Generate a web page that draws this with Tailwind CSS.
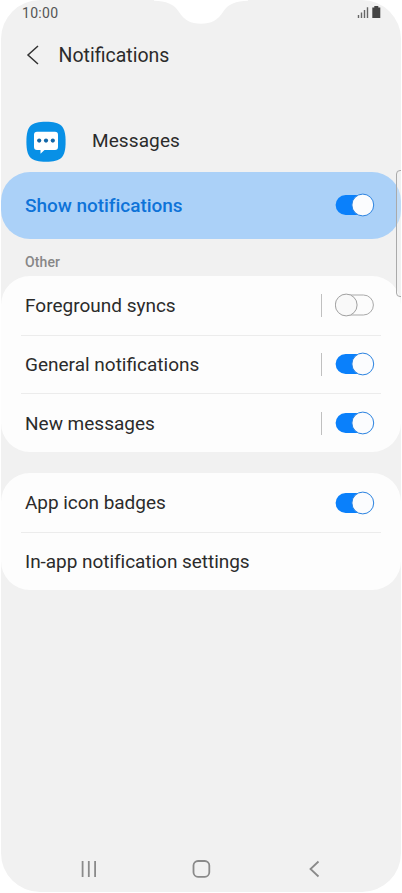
<!DOCTYPE html>
<html lang="en">
<head>
<meta charset="utf-8">
<title>Notifications</title>
<script src="https://cdn.jsdelivr.net/npm/@tailwindcss/browser@4"></script>
</head>
<body class="bg-white font-['Roboto',sans-serif] text-[#2b2b2b]">
<svg class="hidden">
  <symbol id="on" viewBox="0 0 40 24"><rect x="0.6" y="2" width="36" height="20" rx="10" fill="#0a80fb"/><circle cx="27.8" cy="12" r="10.9" fill="#fbfcfe" stroke="#2a82e0" stroke-width="1"/></symbol>
  <symbol id="off" viewBox="0 0 40 24"><rect x="1" y="2" width="37.4" height="20" rx="10" fill="#fcfcfc" stroke="#a9a9a9"/><circle cx="11.2" cy="12" r="10.9" fill="#f9f9f9" stroke="#a0a0a0"/></symbol>
</svg>
<main class="relative mx-px flex h-[892px] w-[400px] flex-col overflow-hidden rounded-[39px] bg-[#f1f1f1]">
  <svg class="absolute left-[153px] top-0 h-[25px] w-[94px]" viewBox="0 0 94 25"><path d="M0 0H94V.8C82 1 74 4 69 12C64 20 57 23.8 47 23.8S30 20 25 12C20 4 12 1 0 .8Z" fill="#fff"/></svg>
  <header class="flex h-[26px] justify-between pl-[21px] pr-[20px]">
    <span class="pt-[5px] text-[14px] leading-4 tracking-[0.3px] text-[#555]">10:00</span>
    <svg class="mt-[5px] h-[14px] w-[24px]" viewBox="0 0 24 14"><path d="M1.5 10v3M4.5 7.5V13M7.5 5V13M10.5 2.2V13" stroke="#666" stroke-width="1.4"/><path d="M15.3 2.5h2V1h4v1.5h2V13h-8z" fill="#444"/></svg>
  </header>
  <div class="flex h-[58px] items-center pl-[25px]">
    <svg class="h-[22px] w-[14px]" viewBox="0 0 14 22" fill="none" stroke="#333" stroke-width="1.5"><path d="M12 2L2 11L12 20"/></svg>
    <h1 class="pl-[18.5px] pt-[2px] text-[19.5px] leading-6">Notifications</h1>
  </div>
  <div class="mt-[37px] flex h-[51px] pl-[25px]">
    <svg class="h-[41px] w-[41px]" viewBox="0 0 41 41"><path d="M20 .8C35 .8 39.6 5 39.6 20.8S35 40.8 20 40.8S.4 36.6 .4 20.8S5 .8 20 .8Z" fill="#0890e6"/><path d="M11 10.8H29Q32 10.8 32 13.8V26Q32 29 29 29H18.5L14.5 32.8V29H11Q8 29 8 26V13.8Q8 10.8 11 10.8Z" fill="#fff"/><g fill="#1267a8"><circle cx="13.2" cy="19.6" r="2.1"/><circle cx="20" cy="19.6" r="2.1"/><circle cx="26.8" cy="19.6" r="2.1"/></g></svg>
    <span class="pl-[25px] pt-[8px] text-[19px] leading-6 tracking-[0.1px]">Messages</span>
  </div>
  <section class="flex h-[67px] items-center justify-between rounded-[29px] bg-[#abd1f8] pl-[24px] pr-[26px] text-[19px] font-medium tracking-[-0.04px] text-[#0e73d8]">
    <span class="pt-[2px]">Show notifications</span>
    <svg class="mb-px h-6 w-10"><use href="#on"/></svg>
  </section>
  <h2 class="h-[37px] pl-[24px] pt-[15px] text-[14px] font-medium leading-4 tracking-[0.1px] text-[#878787]">Other</h2>
  <section class="h-[176px] rounded-[29px] bg-[#fdfdfd] px-[20px] text-[19px]">
    <div class="flex h-[60px] items-center border-b border-[#ececec] pl-1"><span class="grow pt-[2px]">Foreground syncs</span><i class="mr-[13px] h-[23px] w-px bg-[#c0c0c0]"></i><svg class="mb-px mr-1.5 h-6 w-10"><use href="#off"/></svg></div>
    <div class="flex h-[58px] items-center border-b border-[#ececec] pl-1"><span class="grow pt-[2px]">General notifications</span><i class="mb-px mr-[13px] h-[23px] w-px bg-[#c0c0c0]"></i><svg class="mb-px mr-1.5 h-6 w-10"><use href="#on"/></svg></div>
    <div class="flex h-[58px] items-center pl-1"><span class="grow pt-[2px]">New messages</span><i class="mr-[13px] h-[23px] w-px bg-[#c0c0c0]"></i><svg class="mr-1.5 h-6 w-10"><use href="#on"/></svg></div>
  </section>
  <section class="mt-[21px] h-[117px] rounded-[29px] bg-[#fdfdfd] px-[20px] text-[19px] tracking-[-0.04px]">
    <div class="flex h-[60px] items-center border-b border-[#ececec] pl-1"><span class="grow pt-[2px]">App icon badges</span><svg class="mr-1.5 h-6 w-10"><use href="#on"/></svg></div>
    <div class="flex h-[57px] items-center pl-1 pt-[2px]">In-app notification settings</div>
  </section>
  <nav class="mt-auto flex h-[46px] items-center justify-between pl-[76px] pr-[75px]">
    <svg class="h-6 w-6" viewBox="0 0 24 24" fill="none" stroke="#8a8a8a" stroke-width="1.8"><path d="M5.6 4v16M11.8 4v16M18.1 4v16"/></svg>
    <svg class="h-6 w-6" viewBox="0 0 24 24" fill="none" stroke="#8a8a8a" stroke-width="1.8"><rect x="3.5" y="4" width="15.8" height="15.8" rx="4.5"/></svg>
    <svg class="h-6 w-6" viewBox="0 0 24 24" fill="none" stroke="#8a8a8a" stroke-width="1.8"><path d="M16.5 4.5L8.5 12L16.5 19.5"/></svg>
  </nav>
  <div class="absolute -right-[5px] top-[170px] h-[127px] w-[10px] rounded-[4px] border border-[#aaa] bg-[#f1f1f1]/30"></div>
</main>
</body>
</html>
